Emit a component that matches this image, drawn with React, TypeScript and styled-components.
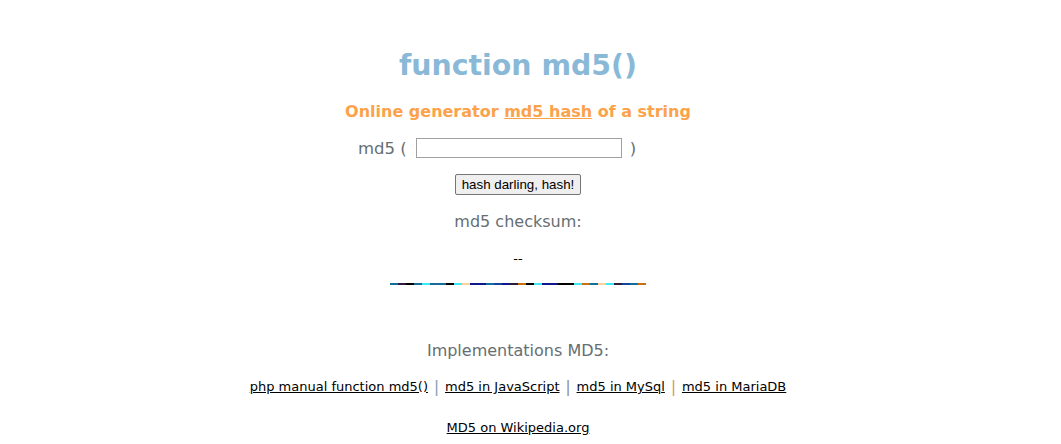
import React from "react";
import styled, { createGlobalStyle } from "styled-components";

const Global = createGlobalStyle`
  html, body { margin: 0; padding: 0; background: #ffffff; }
  body { font-family: "DejaVu Sans", Verdana, sans-serif; }
`;

const Page = styled.div`
  width: 1036px;
  display: flex;
  flex-direction: column;
  align-items: center;
  text-align: center;
`;

const Title = styled.h1`
  margin: 48px 0 0;
  font-size: 28.4px;
  line-height: 36px;
  font-weight: bold;
  color: #8ab9d8;
`;

const Subtitle = styled.h2`
  margin: 17px 0 0;
  font-size: 16px;
  line-height: 22px;
  font-weight: bold;
  color: #fca24b;
  a { color: #fca24b; text-decoration: underline; }
`;

const InputRow = styled.div`
  margin-top: 13px;
  margin-right: 42px;
  height: 24px;
  display: flex;
  align-items: center;
  gap: 8px;
  font-size: 16.5px;
  color: #666e72;
`;

const HashInput = styled.input`
  box-sizing: border-box;
  width: 206px;
  height: 20px;
  border: 1px solid #a0a0a0;
  padding: 1px 2px;
  margin: 0 0 0 1px;
`;

const Button = styled.button`
  margin-top: 14px;
  height: 21px;
  padding: 0 6px;
  font-family: "Liberation Sans", Arial, sans-serif;
  font-size: 13.33px;
  color: #000;
  background: #efefef;
  border: 1px solid #767676;
  border-radius: 2px;
`;

const Label = styled.div<{ $mt: number }>`
  margin-top: ${(p) => p.$mt}px;
  font-size: 16px;
  line-height: 22px;
  color: #666e72;
`;

const Result = styled.div`
  margin-top: 18px;
  font-size: 13px;
  line-height: 16px;
  color: #000;
`;

const Bar = styled.div`
  margin-top: 16px;
  display: flex;
  height: 2px;
`;

const Seg = styled.span<{ $c: string }>`
  width: 8px;
  height: 2px;
  background: ${(p) => p.$c};
`;

const Links = styled.div`
  margin-top: 16px;
  font-size: 13px;
  line-height: 18px;
  display: flex;
  align-items: center;
  gap: 6px;
  a { color: #000; text-decoration: underline; }
`;

const Sep = styled.span<{ $c: string }>`
  color: ${(p) => p.$c};
  font-size: 15px;
`;

const Wiki = styled.div`
  margin-top: 23px;
  font-size: 13px;
  line-height: 18px;
  a { color: #000; text-decoration: underline; }
`;

const T = "#146e9a";
const P = "#2e1e3c";
const K = "#000000";
const C = "#3ee8f2";
const H = "#fcd29a";
const N = "#10168c";
const B = "#17449a";
const O = "#c8700e";

const colors = [T, P, K, T, C, T, T, K, C, H, N, N, T, B, N, P, O, K, C, N, N, K, K, C, O, T, H, C, P, B, T, O];

export default function App() {
  return (
    <Page>
      <Global />
      <Title>function md5()</Title>
      <Subtitle>
        Online generator <a href="#">md5 hash</a> of a string
      </Subtitle>
      <InputRow>
        <span>md5 (</span>
        <HashInput type="text" />
        <span>)</span>
      </InputRow>
      <Button>hash darling, hash!</Button>
      <Label $mt={16}>md5 checksum:</Label>
      <Result>--</Result>
      <Bar>
        {colors.map((c, i) => (
          <Seg key={i} $c={c} />
        ))}
      </Bar>
      <Label $mt={55}>Implementations MD5:</Label>
      <Links>
        <a href="#">php manual function md5()</a>
        <Sep $c="#7d9bb3">|</Sep>
        <a href="#">md5 in JavaScript</a>
        <Sep $c="#8a8a8a">|</Sep>
        <a href="#">md5 in MySql</a>
        <Sep $c="#e0904a">|</Sep>
        <a href="#">md5 in MariaDB</a>
      </Links>
      <Wiki>
        <a href="#">MD5 on Wikipedia.org</a>
      </Wiki>
    </Page>
  );
}
